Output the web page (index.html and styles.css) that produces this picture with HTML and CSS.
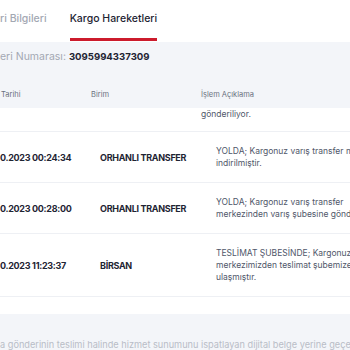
FILE: index.html
```html
<!DOCTYPE html>
<html lang="tr">
<head>
    <meta charset="UTF-8">
    <meta name="viewport" content="width=device-width, initial-scale=1.0">
    <title>Kargo Hareketleri</title>
    <link rel="stylesheet" href="styles.css">
</head>
<body>
    <div class="page">
        <nav class="tabs">
            <a class="tab">ri Bilgileri</a>
            <a class="tab tab-active">Kargo Hareketleri</a>
        </nav>

        <section class="panel">
            <div class="summary">
                <span class="summary-label">eri Numarası:</span>
                <strong class="summary-value">3095994337309</strong>
            </div>
            <div class="thead">
                <div class="th th-date">Tarihi</div>
                <div class="th th-unit">Birim</div>
                <div class="th th-desc">İşlem Açıklama</div>
            </div>
        </section>

        <div class="rows">
            <div class="row row-cut">
                <div class="cell cell-date"></div>
                <div class="cell cell-unit"></div>
                <div class="cell cell-desc">gönderiliyor.</div>
            </div>
            <div class="row">
                <div class="cell cell-date">0.2023 00:24:34</div>
                <div class="cell cell-unit">ORHANLI TRANSFER</div>
                <div class="cell cell-desc">YOLDA; Kargonuz varış transfer merkezine<br>indirilmiştir.</div>
            </div>
            <div class="row">
                <div class="cell cell-date">0.2023 00:28:00</div>
                <div class="cell cell-unit">ORHANLI TRANSFER</div>
                <div class="cell cell-desc">YOLDA; Kargonuz varış transfer<br>merkezinden varış şubesine gönderilmiştir.</div>
            </div>
            <div class="row">
                <div class="cell cell-date">0.2023 11:23:37</div>
                <div class="cell cell-unit">BİRSAN</div>
                <div class="cell cell-desc">TESLİMAT ŞUBESİNDE; Kargonuz transfer<br>merkezimizden teslimat şubemize<br>ulaşmıştır.</div>
            </div>
        </div>

        <footer class="note">
            a gönderinin teslimi halinde hizmet sunumunu ispatlayan dijital belge yerine geçer.
        </footer>
    </div>
</body>
</html>
```

FILE: styles.css
```css
* {
    margin: 0;
    padding: 0;
    box-sizing: border-box;
}

body {
    font-family: 'Inter', 'Noto Sans', 'Segoe UI', Roboto, sans-serif;
    background: #ffffff;
    color: #1e2433;
    overflow: hidden;
}

.page {
    width: 350px;
    height: 350px;
    overflow: hidden;
}

.tabs {
    display: flex;
    gap: 23px;
    height: 42px;
    padding-bottom: 1px;
}

.tab {
    font-size: 10.5px;
    font-weight: 500;
    line-height: 16px;
    padding: 11px 0;
    color: #a3a8b3;
    border-bottom: 3px solid transparent;
    white-space: nowrap;
}

.tab-active {
    color: #1e2433;
    border-bottom-color: #cc1b2c;
}

.panel {
    background: #f3f5f9;
    padding-top: 8px;
}

.summary {
    font-size: 10.5px;
    line-height: 14px;
    margin-bottom: 19px;
    white-space: nowrap;
}

.summary-label {
    color: #a3a8b3;
}

.summary-value {
    font-size: 9.6px;
    font-weight: 700;
    color: #1e2433;
}

.thead,
.row {
    display: grid;
    grid-template-columns: 91px 110px 1fr;
}

.th {
    font-size: 7.5px;
    line-height: 12px;
    padding: 6px 0 7px;
    color: #6b7180;
}

.th-date {
    padding-left: 1px;
}

.row {
    border-bottom: 1px solid #eef0f4;
    align-items: center;
}

.cell {
    padding: 13px 0;
    white-space: nowrap;
}

.row-cut .cell {
    padding: 0 0 11px;
}

.cell-date,
.cell-unit {
    font-size: 9px;
    font-weight: 700;
    letter-spacing: -0.3px;
    color: #1e2433;
}

.cell-unit {
    padding-left: 9px;
}

.cell-desc {
    padding-left: 15px;
    font-size: 8.5px;
    line-height: 12px;
    color: #50576a;
}

.note {
    margin-top: 17px;
    background: #f3f5f9;
    padding: 24px 0 8px;
    font-size: 9.2px;
    line-height: 13px;
    color: #b9bdc7;
    white-space: nowrap;
}
```
